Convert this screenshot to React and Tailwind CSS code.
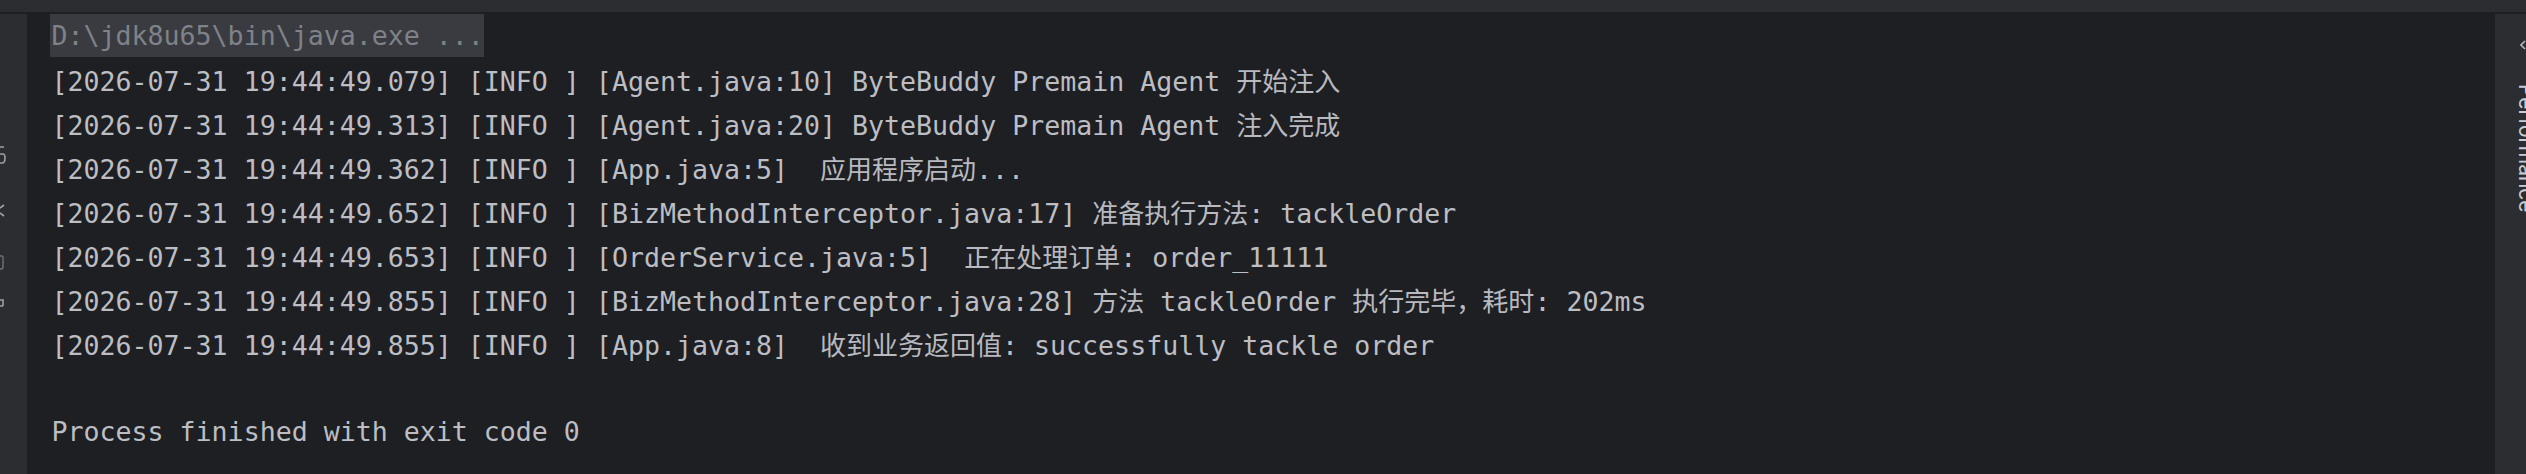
import React from "react";

const lines = [
  "[2026-07-31 19:44:49.079] [INFO ] [Agent.java:10] ByteBuddy Premain Agent 开始注入",
  "[2026-07-31 19:44:49.313] [INFO ] [Agent.java:20] ByteBuddy Premain Agent 注入完成",
  "[2026-07-31 19:44:49.362] [INFO ] [App.java:5]  应用程序启动...",
  "[2026-07-31 19:44:49.652] [INFO ] [BizMethodInterceptor.java:17] 准备执行方法: tackleOrder",
  "[2026-07-31 19:44:49.653] [INFO ] [OrderService.java:5]  正在处理订单: order_11111",
  "[2026-07-31 19:44:49.855] [INFO ] [BizMethodInterceptor.java:28] 方法 tackleOrder 执行完毕，耗时: 202ms",
  "[2026-07-31 19:44:49.855] [INFO ] [App.java:8]  收到业务返回值: successfully tackle order",
];

function Rich({ text }) {
  const parts = text.split(/([\u3000-\u9fff\uff00-\uffef]+)/);
  return parts.map((p, i) =>
    i % 2 === 1 ? (
      <span key={i} className="font-['Noto_Sans_CJK_SC',sans-serif] text-[26px] text-[#b8bac0]">
        {p}
      </span>
    ) : (
      <span key={i}>{p}</span>
    )
  );
}

export default function App() {
  return (
    <div className="h-screen w-full overflow-hidden bg-[#1e1f22] flex flex-col">
      <div className="h-[12px] bg-[#2b2d30] shrink-0" />
      <div className="flex flex-1 pt-[2px] min-h-0">
        {/* left gutter */}
        <div className="w-[27px] shrink-0 bg-[#2b2d30] relative">
          <svg className="absolute left-0 top-[129px]" width="6" height="24" viewBox="0 0 6 24">
            <path d="M0 4 H4 M0 11 H3 Q5 11 5 15 Q5 20 2 20 H0" stroke="#9da0a8" strokeWidth="1.6" fill="none" />
          </svg>
          <svg className="absolute left-0 top-[186px]" width="6" height="20" viewBox="0 0 6 20">
            <path d="M0 8 L4 5 M0 13 L4 16" stroke="#9da0a8" strokeWidth="1.6" fill="none" />
          </svg>
          <svg className="absolute left-0 top-[238px]" width="6" height="20" viewBox="0 0 6 20">
            <path d="M0 4 H2 Q3 4 3 6 V15 Q3 17 1 17 H0" stroke="#6f737a" strokeWidth="1.4" fill="none" />
          </svg>
          <svg className="absolute left-0 top-[280px]" width="6" height="16" viewBox="0 0 6 16">
            <path d="M0 6 H3 V12 M0 12 H3" stroke="#9da0a8" strokeWidth="1.6" fill="none" />
          </svg>
        </div>

        {/* console */}
        <div className="flex-1 pl-[24.5px] font-['DejaVu_Sans_Mono',monospace] text-[26.6px] leading-[44px] text-[#bcbec4] whitespace-pre">
          <div className="h-[44px]">
            <span className="inline-block h-[43px] -ml-[2px] pl-[2px] bg-[#393b40] text-[#7f8289]">
              D:\jdk8u65\bin\java.exe ...
            </span>
          </div>
          {lines.map((l, i) => (
            <div key={i} className="h-[44px]">
              <Rich text={l} />
            </div>
          ))}
          <div className="h-[44px]" />
          <div className="h-[44px]">Process finished with exit code 0</div>
        </div>

        {/* right stripe */}
        <div className="w-[31px] shrink-0 bg-[#2b2d30] overflow-hidden flex flex-col items-start">
          <svg className="ml-[25px] mt-[25px] shrink-0" width="8" height="12" viewBox="0 0 8 12">
            <path d="M5 2 L1 6 L5 10" stroke="#b4b8bf" strokeWidth="1.6" fill="none" />
          </svg>
          <div className="ml-[19px] mt-[33px] [writing-mode:vertical-rl] font-['Inter',sans-serif] text-[21px] leading-[24px] text-[#c9ccd3] whitespace-nowrap">
            Performance
          </div>
        </div>
      </div>
    </div>
  );
}
